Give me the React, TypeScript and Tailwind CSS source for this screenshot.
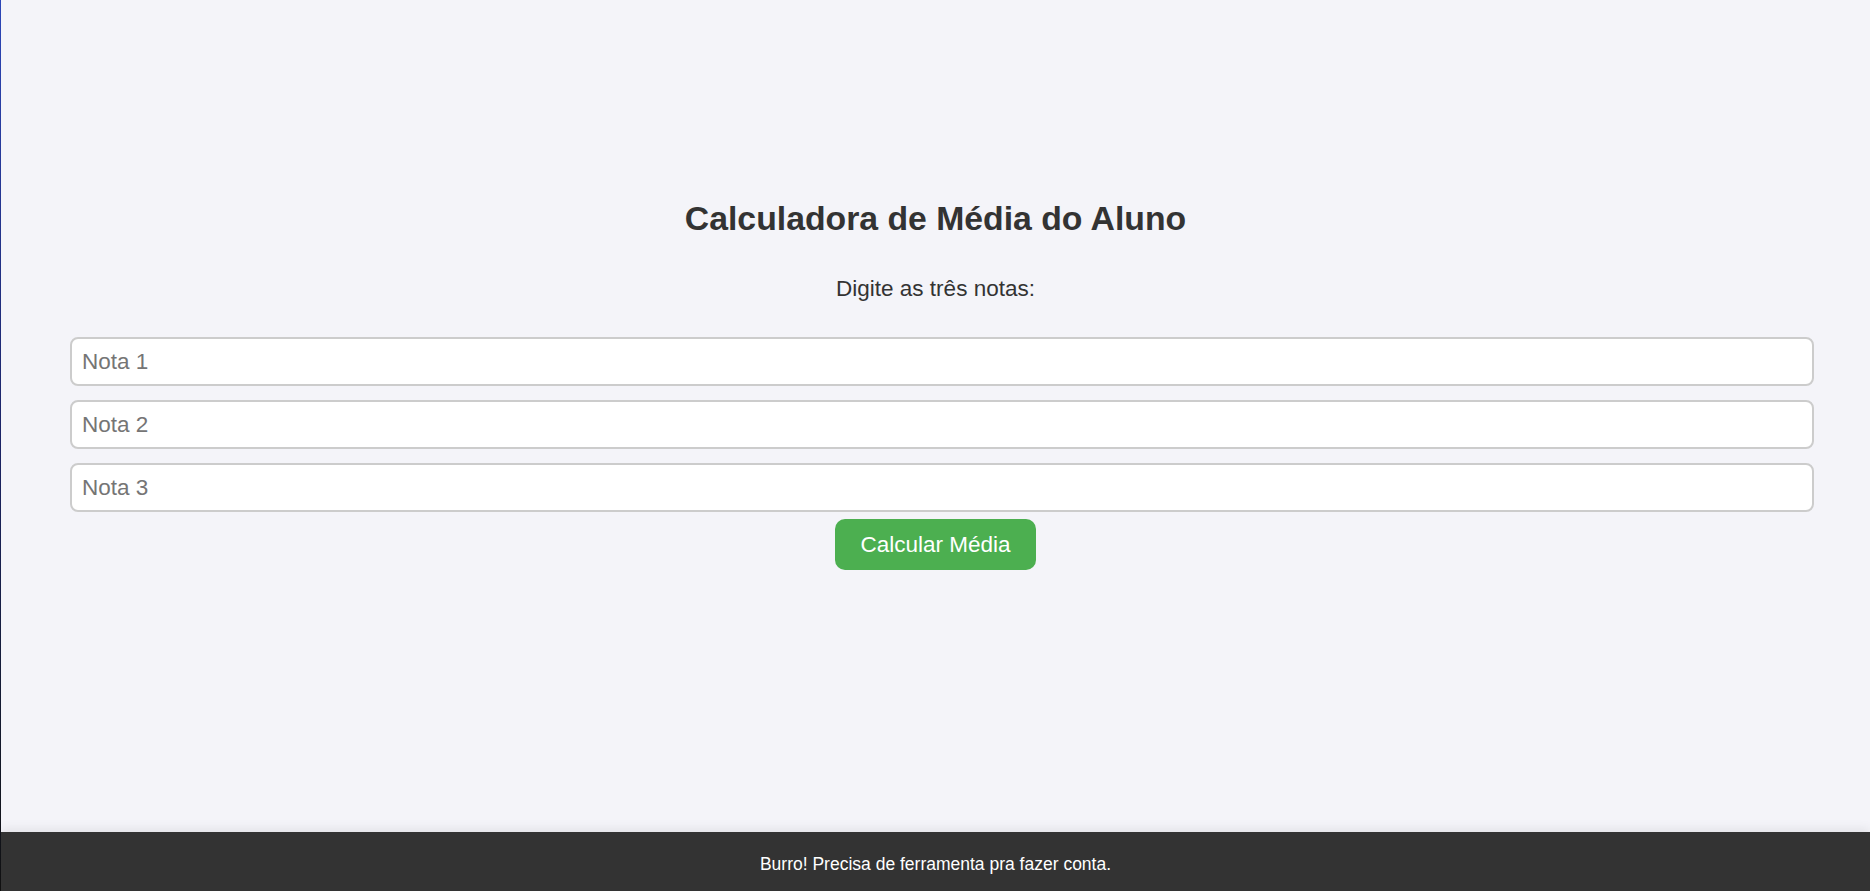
import { useState } from "react";

export default function App() {
  const [notas, setNotas] = useState<string[]>(["", "", ""]);

  const handleChange = (i: number, value: string) => {
    const next = [...notas];
    next[i] = value;
    setNotas(next);
  };

  return (
    <div className="flex min-h-screen bg-[#f4f4f9] font-['Liberation_Sans',Arial,sans-serif]">
      {/* window edge */}
      <div className="w-px shrink-0 bg-gradient-to-b from-[#2c46b8] via-[#1b2365] to-[#111111]"></div>

      <div className="flex flex-1 flex-col">
        <main className="flex flex-1 flex-col items-center pt-[199px]">
          <h2 className="text-[33.75px] leading-[39px] font-bold text-[#333333]">
            Calculadora de Média do Aluno
          </h2>

          <p className="mt-[38px] text-[22.5px] leading-[26px] text-[#333333]">
            Digite as três notas:
          </p>

          <div className="mt-[35px] flex w-full flex-col gap-[14px] pl-[69px] pr-[56px]">
            {["Nota 1", "Nota 2", "Nota 3"].map((label, i) => (
              <input
                key={label}
                type="number"
                placeholder={label}
                value={notas[i]}
                onChange={(e) => handleChange(i, e.target.value)}
                className="h-[49px] w-full rounded-[8px] border-2 border-[#cccccc] bg-white px-[10px] text-[22.5px] text-[#333333] placeholder:text-[#757575] focus:outline-none"
              />
            ))}
          </div>

          <button
            type="button"
            className="mt-[7px] h-[51px] w-[201px] rounded-[10px] bg-[#4caf50] text-[22.5px] text-white hover:bg-[#45a049]"
          >
            Calcular Média
          </button>
        </main>

        <footer className="h-[59px] bg-[#333333] pt-[22px] text-center text-[17.5px] leading-[20px] text-white shadow-[0_-3px_10px_rgba(0,0,0,0.08)]">
          Burro! Precisa de ferramenta pra fazer conta.
        </footer>
      </div>
    </div>
  );
}
